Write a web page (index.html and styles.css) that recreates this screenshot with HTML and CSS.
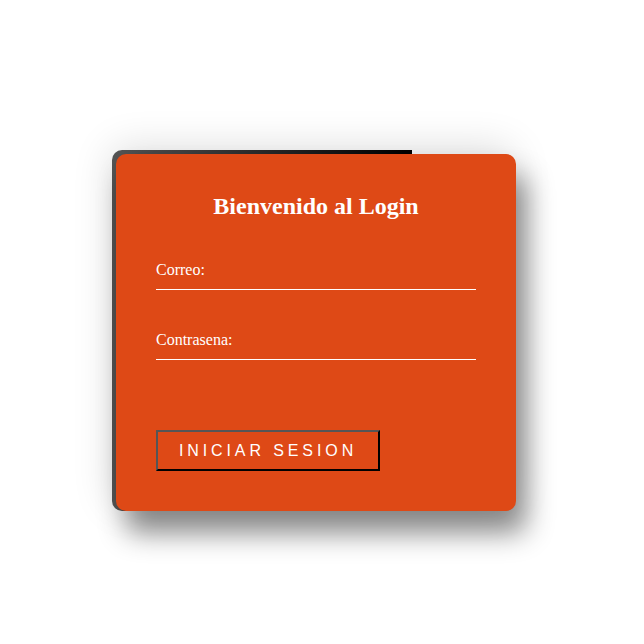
FILE: index.html
```html
<!DOCTYPE html>
<html>
<head>
<meta charset="utf-8">
<link rel="stylesheet" href="styles.css">
</head>
<body>
<div class="page">
  <div class="frame">
    <form class="card">
      <h2 class="title">Bienvenido al Login</h2>
      <div class="field">
        <label class="label">Correo:</label>
        <div class="line"></div>
      </div>
      <div class="field">
        <label class="label">Contrasena:</label>
        <div class="line"></div>
      </div>
      <button type="button" class="btn">INICIAR SESION</button>
    </form>
  </div>
</div>
</body>
</html>
```
FILE: styles.css
```css
html, body {
  margin: 0;
  padding: 0;
  background: #fff;
}
.page {
  width: 644px;
  height: 644px;
  display: flex;
  align-items: flex-start;
  padding: 150px 0 0 112px;
  box-sizing: border-box;
}
.frame {
  padding: 4px 0 0 4px;
  border-radius: 10px;
  background: linear-gradient(to right, #5a5a5a 0, #000 300px, transparent 300px) no-repeat;
}
.card {
  width: 400px;
  height: 357px;
  box-sizing: border-box;
  background: #de4916;
  border-radius: 10px;
  padding: 38px 40px 0 40px;
  font-family: "Liberation Serif", "Times New Roman", serif;
  color: #fff;
  box-shadow: 10px 22px 28px rgba(0,0,0,0.45), -4px -6px 40px rgba(0,0,0,0.14);
}
.title {
  margin: 0;
  text-align: center;
  font-size: 24px;
  font-weight: bold;
  line-height: 28px;
}
.field {
  margin-top: 40px;
}
.label {
  display: block;
  font-size: 16px;
  line-height: 20px;
}
.line {
  height: 1px;
  background: #fff;
  margin-top: 9px;
}
.btn {
  display: block;
  margin-top: 70px;
  width: 224px;
  height: 41px;
  background: transparent;
  border: 2px solid;
  border-color: #555 #000 #000 #555;
  color: #fff;
  font-family: "Liberation Sans", Arial, sans-serif;
  font-size: 16px;
  letter-spacing: 3.9px;
  padding: 0;
}
```
